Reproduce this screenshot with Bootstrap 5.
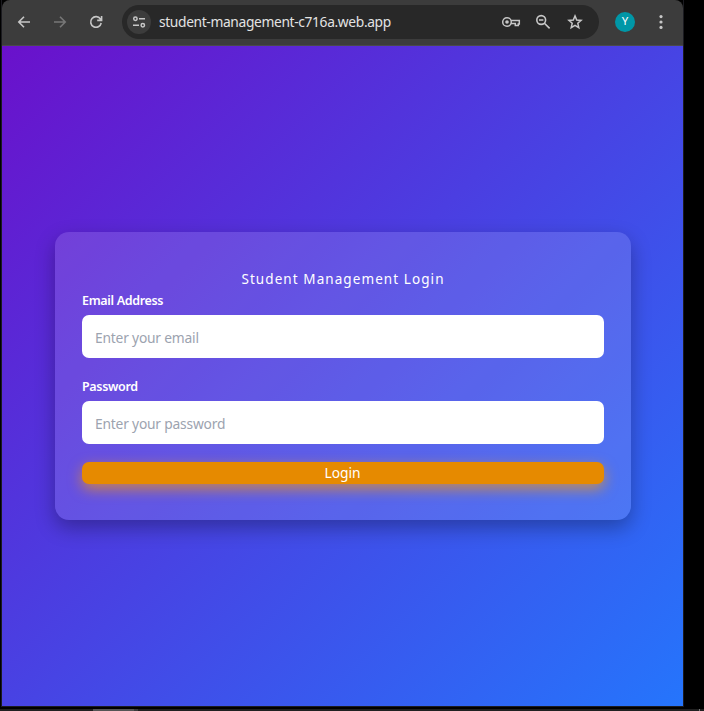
<!DOCTYPE html>
<html lang="en">
<head>
<meta charset="utf-8">
<meta name="viewport" content="width=device-width, initial-scale=1">
<title>Student Management Login</title>
<link href="https://cdn.jsdelivr.net/npm/bootstrap@5.3.0/dist/css/bootstrap.min.css" rel="stylesheet">
<style>
body{background:#000;font-family:"Segoe UI","Noto Sans","Open Sans",sans-serif;height:711px}
.browser{width:681px;height:706px;margin-left:2px;box-shadow:0 0 0 1px #1b1b20}
.toolbar{height:46px;background:#3c3c3c;border-radius:8px 8px 0 0;border-bottom:1px solid #4a4a4c;padding:0 14px 2px 14px;color:#c7c7c7}
.toolbar svg{display:block;fill:none;stroke:currentColor;flex:none}
.nav-icon{margin-left:20px}
.nav-off{color:#777}
.omnibox{width:477px;height:34px;background:#282828;margin-left:18px;padding:0 15px 0 5px}
.site-info{width:24px;height:24px;background:#3c3c3c}
.address{font-size:13.8px;letter-spacing:-.36px;color:#e3e3e3;margin-left:8px;white-space:nowrap;line-height:20px;padding-top:1px}
.zoom-icon{margin-left:14px}
.star-icon{margin-left:15px}
.avatar{width:20px;height:20px;background:#0097a7;color:#fff;font:11px/20px Roboto,sans-serif;margin-left:16px}
.menu-icon{margin-left:18px}
.viewport{background:linear-gradient(135deg,#6a11cb,#2575fc)}
.login-card{width:576px;height:288px;margin-left:53px;margin-top:186px;padding:37px 27px 0;border-radius:14px;background:rgba(255,255,255,.13);box-shadow:0 8px 20px rgba(0,0,0,.3)}
.title{font-size:13.5px;line-height:20px;letter-spacing:1.08px;font-weight:400}
.login-card label{display:block;font-size:12.5px;letter-spacing:-.33px;font-weight:600;line-height:20px;margin-top:2px}
.login-card .form-control{height:43px;margin-top:4px;border:0;border-radius:7px;padding:1px 13px 0;font-size:13.8px;letter-spacing:-.2px;color:#333}
.login-card .form-control::placeholder{color:#9ca3af;opacity:1}
.login-card .second{margin-top:19px}
.login-card .btn-login{height:22px;margin-top:18px;border:0;border-radius:7px;background:#e68a00;color:#fff;font-size:13.8px;line-height:22px;padding:0 1px 0 0;box-shadow:0 5px 14px rgba(255,153,0,.65)}
.taskbar{height:2px;margin-top:3px;background:linear-gradient(90deg,#202020 0 93px,#555 93px 134px,#3c3c3c 134px 138px,#202020 138px 699px,#777 699px 700px,#202020 700px)}
</style>
<script src="https://cdn.jsdelivr.net/npm/bootstrap@5.3.0/dist/js/bootstrap.bundle.min.js"></script>
</head>
<body class="overflow-hidden">
<div class="browser d-flex flex-column">
  <div class="toolbar d-flex align-items-center">
    <svg width="16" height="16" stroke-width="1.6"><path d="M14 8H3M8 2.8L2.8 8 8 13.2"/></svg>
    <svg class="nav-icon nav-off" width="16" height="16" stroke-width="1.6"><path d="M2 8h11M8 2.8L13.2 8 8 13.2"/></svg>
    <svg class="nav-icon" width="16" height="16" stroke-width="1.6"><path d="M13.2 9A5.3 5.3 0 1 1 12.4 5L13.6 6.2M13.6 2v4.4H9.2"/></svg>
    <div class="omnibox rounded-pill d-flex align-items-center">
      <span class="site-info rounded-circle d-flex align-items-center justify-content-center">
        <svg width="14" height="14" stroke-width="1.5"><circle cx="3.4" cy="3.7" r="1.7"/><path d="M7 3.7h6M1 10.3h6"/><circle cx="10.8" cy="10.3" r="1.7"/></svg>
      </span>
      <span class="address">student-management-c716a.web.app</span>
      <svg class="ms-auto" width="20" height="16" stroke-width="1.5"><circle cx="6" cy="8" r="4.3"/><circle cx="6" cy="8" r="1.8" fill="currentColor" stroke="none"/><path d="M9.8 6.5h8.5v3.4h-1v1.5h-3V9.6H9.8"/></svg>
      <svg class="zoom-icon" width="16" height="16" stroke-width="1.6"><circle cx="6.2" cy="6" r="4.4"/><path d="M9.4 9.2l5.2 5.2M4 6h4.4"/></svg>
      <svg class="star-icon" width="18" height="18" stroke-width="1.5"><path d="M9 2.9l1.7 4.1 4.4.4-3.3 2.9 1 4.3L9 12.3l-3.8 2.3 1-4.3-3.3-2.9L7.3 7z"/></svg>
    </div>
    <span class="avatar rounded-circle text-center">Y</span>
    <svg class="menu-icon" width="16" height="16"><g fill="currentColor" stroke="none"><circle cx="8" cy="2.6" r="1.6"/><circle cx="8" cy="8" r="1.6"/><circle cx="8" cy="13.4" r="1.6"/></g></svg>
  </div>
  <main class="viewport flex-grow-1 d-flex align-items-start">
    <form class="login-card text-white">
      <h1 class="title text-center mb-0">Student Management Login</h1>
      <label for="email">Email Address</label>
      <input id="email" type="email" class="form-control" placeholder="Enter your email">
      <label for="password" class="second">Password</label>
      <input id="password" type="password" class="form-control" placeholder="Enter your password">
      <button type="button" class="btn btn-login d-block w-100">Login</button>
    </form>
  </main>
</div>
<div class="taskbar"></div>
</body>
</html>
